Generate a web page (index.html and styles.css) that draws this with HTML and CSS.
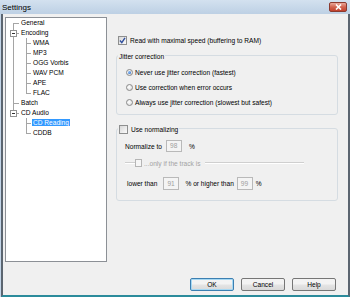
FILE: index.html
```html
<!DOCTYPE html>
<html lang="en">
<head>
  <meta charset="UTF-8" />
  <title>Settings</title>
  <link rel="stylesheet" href="styles.css">
</head>
<body>
  <div class="window">
    <div class="titlebar">
      <span class="title">Settings</span>
      <span class="close">
        <svg width="7" height="6" viewBox="0 0 7 6"><path d="M1 0.5 L6 5.5 M6 0.5 L1 5.5" stroke="#fff" stroke-width="1.6" fill="none"/></svg>
      </span>
    </div>

    <div class="client">
      <div class="main">
        <div class="tree">
          <ul>
            <li><span>General</span></li>
            <li><i class="toggle"></i><span>Encoding</span>
              <ul>
                <li><span>WMA</span></li>
                <li><span>MP3</span></li>
                <li><span>OGG Vorbis</span></li>
                <li><span>WAV PCM</span></li>
                <li><span>APE</span></li>
                <li><span>FLAC</span></li>
              </ul>
            </li>
            <li><span>Batch</span></li>
            <li><i class="toggle"></i><span>CD Audio</span>
              <ul>
                <li><span class="selected">CD Reading</span></li>
                <li><span>CDDB</span></li>
              </ul>
            </li>
          </ul>
        </div>

        <div class="pane">
          <div class="check-row">
            <span class="checkbox">
              <svg width="7" height="7" viewBox="0 0 7 7"><path d="M1 3.5 L2.8 5.6 L6 0.8" stroke="#2f4f9e" stroke-width="1.4" fill="none"/></svg>
            </span>
            <span class="label">Read with maximal speed (buffering to RAM)</span>
          </div>

          <div class="group jitter">
            <div class="legend">Jitter correction</div>
            <div class="radios">
              <div class="radio-row"><span class="radio on"></span><span class="label">Never use jitter correction (fastest)</span></div>
              <div class="radio-row"><span class="radio"></span><span class="label">Use correction when error occurs</span></div>
              <div class="radio-row"><span class="radio"></span><span class="label">Always use jitter correction (slowest but safest)</span></div>
            </div>
          </div>

          <div class="group norm">
            <div class="legend"><span class="checkbox"></span><span class="label">Use normalizing</span></div>
            <div class="row first">
              <span>Normalize to</span>
              <span class="field f-norm">98</span>
              <span class="pct">%</span>
            </div>
            <div class="row only-if">
              <span class="rule short"></span>
              <span class="mini-check"></span>
              <span class="dim">...only if the track is</span>
              <span class="rule long"></span>
            </div>
            <div class="row range">
              <span>lower than</span>
              <span class="field f-low">91</span>
              <span class="or">% or higher than</span>
              <span class="field f-high">99</span>
              <span class="pct2">%</span>
            </div>
          </div>
        </div>
      </div>

      <div class="buttons">
        <button class="default">OK</button>
        <button>Cancel</button>
        <button>Help</button>
      </div>
    </div>
  </div>
</body>
</html>
```

FILE: styles.css
```css
body {
  margin: 0;
  font-family: "Liberation Sans", Arial, sans-serif;
  font-size: 6.6px;
  color: #000;
}

.window {
  width: 350px;
  height: 297px;
  display: flex;
  flex-direction: column;
  overflow: hidden;
  background: #c3d5e8;
}

.titlebar {
  height: 14px;
  flex: none;
  display: flex;
  align-items: center;
  justify-content: space-between;
  padding: 0 3px 0 2px;
  background: linear-gradient(#d3e1ef, #bdd0e4);
}

.title {
  font-size: 8px;
}

.close {
  width: 18px;
  height: 10px;
  box-sizing: border-box;
  border: 1px solid #8b3a2f;
  border-radius: 2px;
  background: linear-gradient(#eaa89a, #d26450 50%, #c2402c);
  display: flex;
  align-items: center;
  justify-content: center;
}

.client {
  flex: 1;
  display: flex;
  flex-direction: column;
  margin-left: 1px;
  background: #f0f0f0;
  border-left: 2px solid #5b6570;
  border-right: 2px solid #5b6570;
  border-bottom: 2px solid #2b8b9b;
}

.main {
  display: flex;
  margin-top: 3px;
  padding-left: 2px;
}

/* tree */
.tree {
  width: 102px;
  height: 245px;
  box-sizing: border-box;
  border: 1px solid #8c9096;
  background: #fff;
}

.tree ul {
  list-style: none;
  margin: 0;
  padding: 0;
}

.tree li {
  position: relative;
  padding-left: 15px;
  line-height: 10px;
  white-space: nowrap;
}

.tree li::before {
  content: "";
  position: absolute;
  left: 7px;
  top: 5px;
  width: 6px;
  border-top: 1px solid #a5a5a5;
}

.tree li::after {
  content: "";
  position: absolute;
  left: 7px;
  top: 0;
  bottom: 0;
  border-left: 1px solid #a5a5a5;
}

.tree > ul > li:first-child::after {
  top: 5px;
}

.tree li:last-child::after {
  bottom: auto;
  height: 5px;
}

.tree li li {
  padding-left: 12px;
}

.tree li li::before {
  left: 5px;
  width: 5px;
}

.tree li li::after {
  left: 5px;
}

.toggle {
  position: absolute;
  z-index: 1;
  left: 4px;
  top: 2px;
  width: 7px;
  height: 7px;
  box-sizing: border-box;
  border: 1px solid #929292;
  background: #fff;
}

.toggle::after {
  content: "";
  position: absolute;
  left: 1px;
  top: 2px;
  width: 3px;
  height: 1px;
  background: #333;
}

.selected {
  margin-left: -1px;
  padding: 0 1px;
  background: #3399ff;
  color: #fff;
}

/* right pane */
.pane {
  width: 222px;
  margin-left: 9px;
  padding-top: 18px;
}

.check-row {
  height: 10px;
  display: flex;
  align-items: center;
  padding-left: 2px;
}

.checkbox {
  width: 9px;
  height: 9px;
  flex: none;
  box-sizing: border-box;
  border: 1px solid #8e8f8f;
  background: linear-gradient(135deg, #d8d8d8, #fbfbfb);
  display: flex;
  align-items: center;
  justify-content: center;
}

.check-row .label,
.legend .label {
  margin-left: 3px;
}

.group {
  border: 1px solid #d5dce2;
  border-radius: 3px;
}

.legend {
  display: flex;
  align-items: center;
  width: max-content;
  margin: -5px 0 0 1px;
  padding: 0 1px;
  background: #f0f0f0;
}

.jitter {
  margin-top: 10px;
  padding-bottom: 4px;
}

.jitter .legend {
  height: 8px;
  margin-top: -4px;
}

.radios {
  margin-top: 5px;
}

.radio-row {
  height: 15px;
  display: flex;
  align-items: center;
  padding-left: 9px;
}

.radio {
  width: 7px;
  height: 7px;
  flex: none;
  box-sizing: border-box;
  border: 1px solid #8a8a8a;
  border-radius: 50%;
  background: radial-gradient(circle at 40% 40%, #fff, #d6d6d6);
  display: flex;
  align-items: center;
  justify-content: center;
}

.radio.on::after {
  content: "";
  width: 3px;
  height: 3px;
  border-radius: 50%;
  background: radial-gradient(circle at 35% 35%, #8fc0f5, #1c5fc9);
}

.radio-row .label {
  margin-left: 2px;
}

.norm {
  margin-top: 13px;
  padding-bottom: 10px;
}

.norm .legend {
  height: 10px;
}

.row {
  display: flex;
  align-items: center;
  padding-left: 8px;
}

.row.first {
  height: 12px;
  margin-top: 6px;
}

.row.only-if {
  height: 10px;
  margin-top: 6px;
}

.row.range {
  height: 13px;
  margin-top: 9px;
  padding-left: 10px;
}

.field {
  width: 16px;
  height: 12px;
  box-sizing: border-box;
  border: 1px solid #b9b9b9;
  background: #f4f4f4;
  color: #a0a0a0;
  padding-left: 3px;
  line-height: 10px;
}

.range .field {
  height: 13px;
  line-height: 11px;
}

.f-norm {
  margin-left: 4px;
}

.pct {
  margin-left: 7px;
}

.f-low {
  margin-left: 6px;
}

.or {
  margin-left: 6px;
}

.f-high {
  margin-left: 3px;
}

.pct2 {
  margin-left: 3px;
}

.rule {
  height: 0;
  border-top: 1px solid #cfcfcf;
  border-bottom: 1px solid #fff;
}

.rule.short {
  width: 10px;
}

.rule.long {
  width: 99px;
  margin-left: 5px;
}

.mini-check {
  width: 7px;
  height: 8px;
  box-sizing: border-box;
  border: 1px solid #b5b5b5;
  background: #f6f6f6;
}

.dim {
  margin-left: 2px;
  color: #a3a3a3;
}

/* buttons */
.buttons {
  margin-top: auto;
  display: flex;
  justify-content: flex-end;
  gap: 7px;
  padding: 0 12px 4px 0;
}

button {
  width: 44px;
  height: 13px;
  padding: 0;
  font: inherit;
  color: #000;
  border: 1px solid #767676;
  border-radius: 2px;
  background: linear-gradient(#f3f3f3 45%, #e4e4e4 55%, #d9d9d9);
  cursor: pointer;
}

button.default {
  border-color: #3c7fb1;
  box-shadow: inset 0 0 0 1px #a6d8f3;
}
```
